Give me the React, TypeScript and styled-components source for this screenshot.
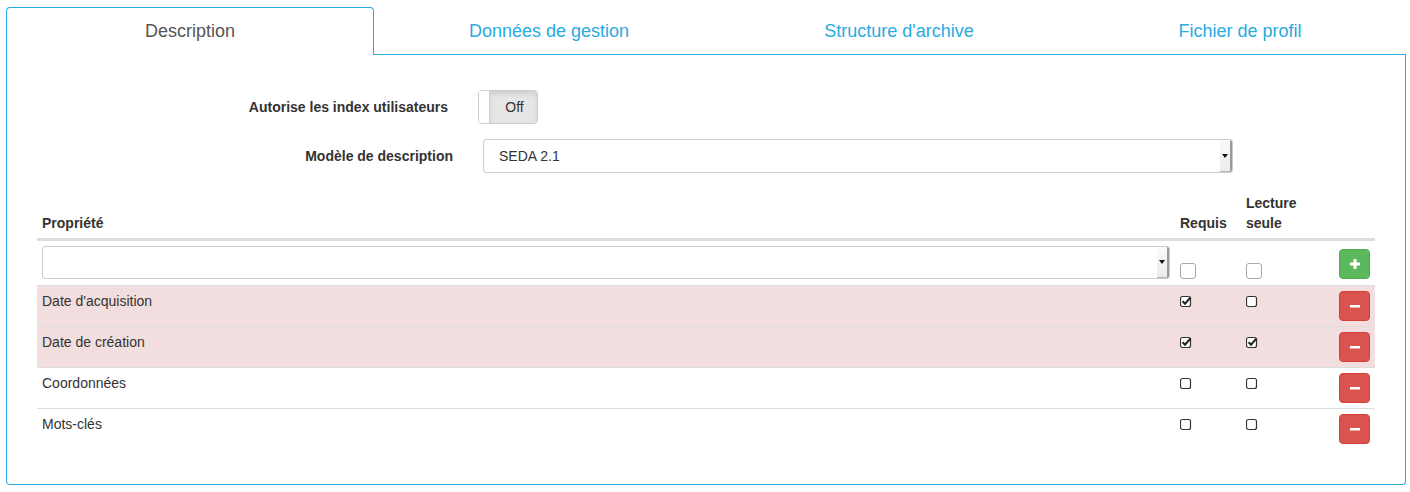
import React from "react";
import styled, { createGlobalStyle } from "styled-components";

const Global = createGlobalStyle`
  html, body { margin: 0; padding: 0; background: #fff; }
  body { font-family: "Liberation Sans", Arial, sans-serif; font-size: 14px; line-height: 20px; color: #333; }
  * { box-sizing: border-box; }
`;

const BLUE = "#29abe2";

const Page = styled.div`
  padding: 7px 0 0 6px;
  width: 1406px;
`;

const Tabs = styled.div`
  display: flex;
  width: 1400px;
  height: 48px;
`;

const Tab = styled.div<{ $active?: boolean; $w: number }>`
  width: ${(p) => p.$w}px;
  flex: none;
  height: 48px;
  display: flex;
  align-items: center;
  justify-content: center;
  font-size: 18px;
  color: ${(p) => (p.$active ? "#555" : BLUE)};
  background: #fff;
  border: ${(p) => (p.$active ? `1px solid ${BLUE}` : "none")};
  border-bottom: ${(p) => (p.$active ? "none" : `1px solid ${BLUE}`)};
  border-radius: ${(p) => (p.$active ? "4px 4px 0 0" : "0")};
  padding-bottom: ${(p) => (p.$active ? "1px" : "0")};
`;

const Panel = styled.div`
  width: 1400px;
  height: 430px;
  border: 1px solid ${BLUE};
  border-top: none;
  border-radius: 0 0 4px 4px;
  padding: 35px 29px 0 30px;
`;

const FormRow = styled.div<{ $shift?: number }>`
  display: grid;
  grid-template-columns: 416px 750px;
  column-gap: 30px;
  align-items: center;
  margin-left: ${(p) => -(p.$shift || 0)}px;
  margin-bottom: 15px;
  height: 34px;
`;

const FormLabel = styled.div`
  text-align: right;
  font-weight: bold;
  color: #333;
`;

const Toggle = styled.div`
  width: 60px;
  height: 34px;
  border: 1px solid #ccc;
  border-radius: 4px;
  display: flex;
  overflow: hidden;
`;

const ToggleHandle = styled.div`
  width: 11px;
  background: #fff;
  border-right: 1px solid #d4d4d4;
`;

const ToggleOff = styled.div`
  flex: 1;
  background: #e6e6e6;
  box-shadow: inset 0 3px 5px rgba(0, 0, 0, 0.1);
  display: flex;
  align-items: center;
  justify-content: center;
  color: #333;
  padding-left: 2px;
`;

const SelectBox = styled.div<{ $h: number }>`
  height: ${(p) => p.$h}px;
  width: 100%;
  border: 1px solid #ccc;
  border-radius: 3px;
  background: #fff;
  display: flex;
  align-items: stretch;
  overflow: hidden;
`;

const SelectText = styled.div`
  flex: 1;
  display: flex;
  align-items: center;
  padding-left: 15px;
  color: #333;
`;

const SelectArrow = styled.div`
  width: 12px;
  display: flex;
  align-items: center;
  justify-content: center;
  background: linear-gradient(#fafafa, #ececec);
  border-right: 2px solid #9a9a9a;
  border-bottom: 1px solid #b5b5b5;
`;

const Caret = () => (
  <svg width="6" height="4" viewBox="0 0 6 4">
    <path d="M0 0 H6 L3 4 Z" fill="#111" />
  </svg>
);

const Table = styled.div`
  margin-top: 15px;
  width: 1338px;
`;

const Row = styled.div<{ $tone?: "danger" | "none"; $head?: boolean; $align?: string; $pb?: number }>`
  display: grid;
  grid-template-columns: 1138px 66px 93px 41px;
  align-items: ${(p) => p.$align || "start"};
  background: ${(p) => (p.$tone === "danger" ? "#f2dede" : "transparent")};
  border-top: ${(p) => (p.$head ? "none" : "1px solid #ddd")};
  border-bottom: ${(p) => (p.$head ? "2px solid #ddd" : "none")};
  padding-bottom: ${(p) => p.$pb || 0}px;
`;

const Cell = styled.div<{ $bold?: boolean; $right?: boolean }>`
  padding: 5px;
  font-weight: ${(p) => (p.$bold ? "bold" : "normal")};
  display: flex;
  justify-content: ${(p) => (p.$right ? "flex-end" : "flex-start")};
`;

const BigCheck = styled.span`
  display: block;
  width: 16px;
  height: 16px;
  border: 1px solid #a9a9a9;
  border-radius: 3px;
  background: #fff;
`;

const SmallCheckWrap = styled.span`
  display: block;
  margin-top: 4px;
  line-height: 0;
`;

const SmallCheck = ({ checked }: { checked: boolean }) => (
  <SmallCheckWrap>
    <svg width="13" height="13" viewBox="0 0 13 13">
      <rect x="0.5" y="1.5" width="10" height="10" rx="2" fill="#fff" stroke="#333" strokeWidth="1.2" />
      {checked && <path d="M2.6 6.3 L5 8.7 L10.6 2.4" fill="none" stroke="#222" strokeWidth="2.1" />}
    </svg>
  </SmallCheckWrap>
);

const Btn = styled.button<{ $variant: "success" | "danger" }>`
  width: 31px;
  height: 30px;
  padding: 0;
  border-radius: 4px;
  border: 1px solid ${(p) => (p.$variant === "success" ? "#4cae4c" : "#d43f3a")};
  background: ${(p) => (p.$variant === "success" ? "#5cb85c" : "#d9534f")};
  display: flex;
  align-items: center;
  justify-content: center;
  cursor: pointer;
`;

const PlusIcon = () => (
  <svg width="10" height="10" viewBox="0 0 10 10">
    <rect x="3.5" y="0" width="3" height="10" fill="#fff" />
    <rect x="0" y="3.5" width="10" height="3" fill="#fff" />
  </svg>
);

const MinusIcon = () => (
  <svg width="10" height="10" viewBox="0 0 10 10">
    <rect x="0" y="4" width="10" height="2.5" fill="#fff" />
  </svg>
);

type Item = { name: string; req: boolean; ro: boolean; danger: boolean };

const items: Item[] = [
  { name: "Date d'acquisition", req: true, ro: false, danger: true },
  { name: "Date de création", req: true, ro: true, danger: true },
  { name: "Coordonnées", req: false, ro: false, danger: false },
  { name: "Mots-clés", req: false, ro: false, danger: false },
];

export default function App() {
  return (
    <>
      <Global />
      <Page>
        <Tabs>
          <Tab $active $w={368}>Description</Tab>
          <Tab $w={350}>Données de gestion</Tab>
          <Tab $w={350}>Structure d'archive</Tab>
          <Tab $w={332}>Fichier de profil</Tab>
        </Tabs>
        <Panel>
          <FormRow $shift={5}>
            <FormLabel>Autorise les index utilisateurs</FormLabel>
            <Toggle>
              <ToggleHandle />
              <ToggleOff>Off</ToggleOff>
            </Toggle>
          </FormRow>
          <FormRow>
            <FormLabel>Modèle de description</FormLabel>
            <SelectBox $h={34}>
              <SelectText>SEDA 2.1</SelectText>
              <SelectArrow>
                <Caret />
              </SelectArrow>
            </SelectBox>
          </FormRow>
          <Table>
            <Row $head $align="end">
              <Cell $bold>Propriété</Cell>
              <Cell $bold>Requis</Cell>
              <Cell $bold>
                Lecture
                <br />
                seule
              </Cell>
              <Cell />
            </Row>
            <Row $align="end" $pb={1}>
              <Cell>
                <SelectBox $h={33}>
                  <SelectText />
                  <SelectArrow>
                    <Caret />
                  </SelectArrow>
                </SelectBox>
              </Cell>
              <Cell>
                <BigCheck />
              </Cell>
              <Cell>
                <BigCheck />
              </Cell>
              <Cell $right>
                <Btn $variant="success">
                  <PlusIcon />
                </Btn>
              </Cell>
            </Row>
            {items.map((it) => (
              <Row key={it.name} $tone={it.danger ? "danger" : "none"}>
                <Cell>{it.name}</Cell>
                <Cell>
                  <SmallCheck checked={it.req} />
                </Cell>
                <Cell>
                  <SmallCheck checked={it.ro} />
                </Cell>
                <Cell $right>
                  <Btn $variant="danger">
                    <MinusIcon />
                  </Btn>
                </Cell>
              </Row>
            ))}
          </Table>
        </Panel>
      </Page>
    </>
  );
}
